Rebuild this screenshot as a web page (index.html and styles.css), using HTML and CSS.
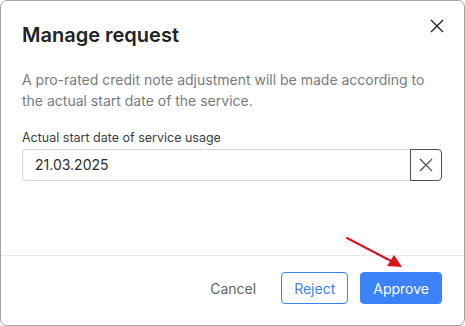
FILE: index.html
```html
<!DOCTYPE html>
<html>
<head>
<meta charset="utf-8">
<link rel="stylesheet" href="styles.css">
</head>
<body>
<div class="dialog">
  <div class="header">
    <h1 class="title">Manage request</h1>
    <button class="close" aria-label="Close">
      <svg width="14" height="14" viewBox="0 0 14 14"><path d="M1 1L13 13M13 1L1 13" stroke="#222" stroke-width="1.4" fill="none"/></svg>
    </button>
  </div>
  <div class="body">
    <p class="desc">A pro-rated credit note adjustment will be made according to the actual start date of the service.</p>
    <label class="label">Actual start date of service usage</label>
    <div class="field">
      <div class="input">21.03.2025</div>
      <button class="clear" aria-label="Clear">
        <svg width="14" height="14" viewBox="0 0 14 14"><path d="M1 1L13 13M13 1L1 13" stroke="#555" stroke-width="1.3" fill="none"/></svg>
      </button>
    </div>
  </div>
  <div class="footer">
    <button class="btn btn-text">Cancel</button>
    <button class="btn btn-outline">Reject</button>
    <button class="btn btn-primary">Approve</button>
  </div>
  <svg class="arrow" width="70" height="40" viewBox="0 0 70 40">
    <line x1="2" y1="2" x2="46" y2="25" stroke="#d9141b" stroke-width="2" stroke-linecap="round"/>
    <polygon points="57,31 42,30 49,19" fill="#d9141b"/>
  </svg>
</div>
</body>
</html>
```
FILE: styles.css
```css
* { box-sizing: border-box; }
html, body { margin: 0; padding: 0; background: #fff; }
body {
  font-family: Inter, "Noto Sans", sans-serif;
  width: 465px;
  height: 326px;
  overflow: hidden;
}
.dialog {
  position: relative;
  width: 465px;
  height: 326px;
  border: 1px solid #a3a3a3;
  border-radius: 7px;
  background: #fff;
  display: flex;
  flex-direction: column;
}
.header {
  display: flex;
  justify-content: space-between;
  align-items: flex-start;
  padding: 21px 20px 0 21px;
}
.title {
  margin: 0;
  font-size: 20px;
  font-weight: 600;
  line-height: 26px;
  color: #1f2328;
}
.close {
  border: 0;
  background: none;
  padding: 0;
  margin-top: -3px;
  width: 14px;
  height: 14px;
  display: flex;
}
.body {
  padding: 21px 22px 0 21px;
  flex: 1;
  border-bottom: 1px solid #e7e7e7;
}
.desc {
  margin: 0;
  font-size: 14px;
  line-height: 21px;
  color: #767b82;
}
.label {
  display: block;
  margin-top: 19px;
  font-size: 12.5px;
  line-height: 16px;
  color: #3a3d42;
}
.field {
  display: flex;
  margin-top: 3px;
  height: 32px;
}
.input {
  flex: 1;
  border: 1px solid #d4d7dc;
  border-right: 0;
  border-radius: 4px 0 0 4px;
  padding: 0 12px;
  font-size: 14px;
  line-height: 30px;
  color: #2b2e33;
}
.clear {
  width: 32px;
  border: 1px solid #4d5157;
  border-radius: 0 4px 4px 0;
  background: #fff;
  display: flex;
  align-items: center;
  justify-content: center;
  padding: 0;
}
.footer {
  display: flex;
  justify-content: flex-end;
  align-items: center;
  gap: 12px;
  padding: 16px 22px 21px 0;
}
.btn {
  font-family: inherit;
  font-size: 14px;
  height: 32px;
  border-radius: 4px;
  padding: 0 12px;
  cursor: pointer;
}
.btn-text {
  background: none;
  border: 1px solid transparent;
  color: #5f6368;
}
.btn-outline {
  background: #fff;
  border: 1px solid #3b82f6;
  color: #3b82f6;
}
.btn-primary {
  background: #3b82f6;
  border: 1px solid #3b82f6;
  color: #fff;
}
.arrow {
  position: absolute;
  left: 344px;
  top: 235px;
}
```
